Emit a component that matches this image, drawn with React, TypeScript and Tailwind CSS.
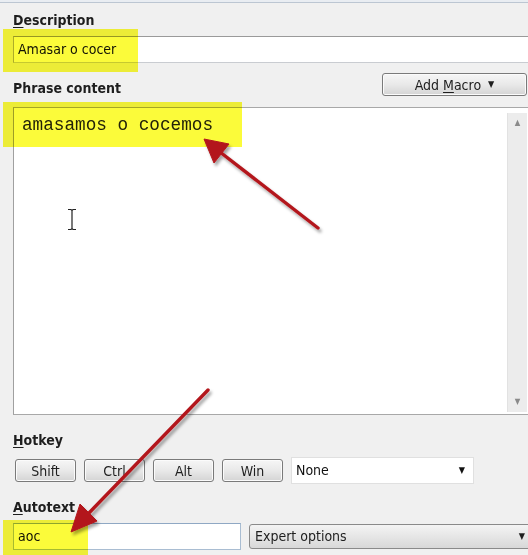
import React from "react";

const ui = "font-['DejaVu_Sans_Condensed','Liberation_Sans',sans-serif]";

const Label = ({ children, className = "" }: { children: React.ReactNode; className?: string }) => (
  <div className={`h-[17px] text-[14px] leading-[17px] font-bold text-[#1e1e1e] ${className}`}>{children}</div>
);

const KeyButton = ({ label }: { label: string }) => (
  <button className="w-[61px] h-[23px] shrink-0 rounded-[3px] border border-[#7a7a7a] bg-gradient-to-b from-[#f6f6f6] via-[#e9e9e9] to-[#d4d4d4] text-[14px] leading-[20px] text-[#1e1e1e] shadow-[inset_0_0_0_1px_#fbfbfb]">
    {label}
  </button>
);

const Arrows = () => (
  <svg className="absolute inset-0 pointer-events-none" width={528} height={555} viewBox="0 0 528 555">
    <defs>
      <filter id="shadow" x="-20%" y="-20%" width="140%" height="140%">
        <feDropShadow dx="2" dy="3" stdDeviation="1.6" floodColor="#000" floodOpacity="0.35" />
      </filter>
    </defs>
    <g filter="url(#shadow)" fill="#b3181c" stroke="#b3181c">
      <line x1={318} y1={228} x2={220} y2={152} strokeWidth={3.4} strokeLinecap="round" />
      <polygon points="204,139 229,144 214,163" strokeWidth={1} strokeLinejoin="round" />
      <line x1={208} y1={390} x2={88} y2={514} strokeWidth={3.4} strokeLinecap="round" />
      <polygon points="71,532 97,521 80,504" strokeWidth={1} strokeLinejoin="round" />
    </g>
  </svg>
);

const Highlight = ({ className }: { className: string }) => (
  <div className={`absolute bg-[#fbfb3a] mix-blend-multiply pointer-events-none ${className}`} />
);

export default function App() {
  return (
    <div className={`relative w-[528px] h-[555px] overflow-hidden bg-[#f0f0f0] ${ui}`}>
      <div className="h-[3px] bg-[#e9edf2] border-b border-[#bcc6d2]" />

      <div className="pl-[13px]">
        <Label className="mt-[9px]">
          <span className="underline underline-offset-2">D</span>escription
        </Label>
        <div className="mt-[7px] h-[27px] -mr-[10px] bg-white border border-[#c9ccd1] border-t-[#9a9a9a] border-l-[#b0b0b0] pl-[4px] text-[14px] leading-[25px] text-[#111]">
          Amasar o cocer
        </div>

        <div className="mt-[10px] h-[24px] flex items-start justify-between pr-[1px]">
          <Label className="mt-[7px]">Phrase content</Label>
          <button className="w-[145px] h-[23px] rounded-[3px] border border-[#7a7a7a] bg-gradient-to-b from-[#f6f6f6] via-[#e9e9e9] to-[#d4d4d4] text-[14px] leading-[20px] text-[#1e1e1e] shadow-[inset_0_0_0_1px_#fbfbfb] flex items-center justify-center gap-[7px]">
            <span>
              Add <span className="underline underline-offset-2">M</span>acro
            </span>
            <span className="text-[9px] leading-none">▼</span>
          </button>
        </div>

        <div className="mt-[10px] h-[308px] -mr-[10px] relative bg-white border border-[#d5d5d5] border-t-[#a8a8a8] border-l-[#a0a0a0] border-b-[#a8a8a8] flex">
          <div className="flex-1 pl-[8px] pt-[7px] font-['Liberation_Mono','Courier_New',monospace] text-[17.7px] leading-[20px] text-[#222]">
            amasamos o cocemos
          </div>
          <div className="w-[20px] mr-[10px] mt-[5px] mb-[2px] bg-[#ececec] border-l border-[#e2e2e2] flex flex-col justify-between items-center py-[6px] text-[8px] text-[#8a8a8a] leading-none">
            <span>▲</span>
            <span>▼</span>
          </div>
          <svg className="absolute left-[53px] top-[100px]" width={10} height={23} viewBox="0 0 10 23">
            <path d="M1 1.5h3l1 1 1-1h3M5 2.5v18M1 21.5h3l1-1 1 1h3" stroke="#222" strokeWidth={1.2} fill="none" />
          </svg>
        </div>

        <Label className="mt-[17px]">
          <span className="underline underline-offset-2">H</span>otkey
        </Label>
        <div className="mt-[8px] h-[27px] flex items-center gap-[8px] pl-[2px]">
          <KeyButton label="Shift" />
          <KeyButton label="Ctrl" />
          <KeyButton label="Alt" />
          <KeyButton label="Win" />
          <div className="w-[183px] h-[27px] shrink-0 bg-white border border-[#e0e0e0] flex items-center justify-between pl-[4px] pr-[8px] text-[14px] text-[#111]">
            <span>None</span>
            <span className="text-[9px] leading-none">▼</span>
          </div>
        </div>

        <Label className="mt-[15px]">
          <span className="underline underline-offset-2">A</span>utotext
        </Label>
        <div className="mt-[7px] h-[27px] flex items-center gap-[8px]">
          <div className="w-[228px] h-[27px] shrink-0 bg-white border border-[#a9bdd2] border-t-[#8fa8c4] pl-[4px] text-[14px] leading-[25px] text-[#111]">
            aoc
          </div>
          <div className="w-[290px] h-[25px] shrink-0 border border-[#8a8a8a] rounded-l-[3px] bg-gradient-to-b from-[#f4f4f4] via-[#e6e6e6] to-[#d8d8d8] flex items-center justify-between pl-[5px] pr-[13px] text-[14px] text-[#1e1e1e]">
            <span>Expert options</span>
            <span className="text-[9px] leading-none">▼</span>
          </div>
        </div>
      </div>

      <Highlight className="left-[3px] top-[29px] w-[135px] h-[43px]" />
      <Highlight className="left-[3px] top-[102px] w-[239px] h-[45px]" />
      <Highlight className="left-[3px] top-[520px] w-[85px] h-[35px]" />

      <Arrows />
    </div>
  );
}
